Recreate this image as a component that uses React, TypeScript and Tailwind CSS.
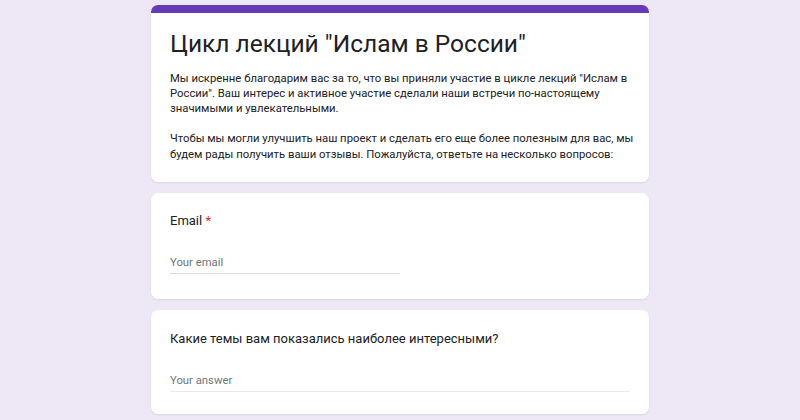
import React from 'react';

export default function App() {
  return (
    <div
      className="min-h-[420px] w-full bg-[#ede7f6] pt-[5px] text-[#202124]"
      style={{ fontFamily: 'Roboto, "Noto Sans", sans-serif' }}
    >
      <div className="mx-auto flex w-[498px] flex-col gap-[11px]">
        {/* Header card */}
        <div className="overflow-hidden rounded-[7px] bg-white shadow-[0_1px_2px_rgba(0,0,0,0.08)]">
          <div className="h-[8px] bg-[#673ab7]" />
          <div className="pb-[19px] pl-[19px] pr-[12px] pt-[14px]">
            <h1 className="text-[24.5px] leading-[34px] font-normal">
              Цикл лекций "Ислам в России"
            </h1>
            <p className="mt-[10px] text-[11.3px] leading-[15px]">
              Мы искренне благодарим вас за то, что вы приняли участие в цикле лекций "Ислам в России". Ваш интерес и активное участие сделали наши встречи по-настоящему значимыми и увлекательными.
            </p>
            <p className="mt-[15px] text-[11.3px] leading-[16px]">
              Чтобы мы могли улучшить наш проект и сделать его еще более полезным для вас, мы будем рады получить ваши отзывы. Пожалуйста, ответьте на несколько вопросов:
            </p>
          </div>
        </div>

        {/* Email card */}
        <div className="rounded-[7px] bg-white px-[19px] pb-[25px] pt-[19px] shadow-[0_1px_2px_rgba(0,0,0,0.08)]">
          <div className="text-[13px] leading-[18px]">
            Email <span className="text-[#d93025]">*</span>
          </div>
          <div className="mt-[25px] w-[230px] border-b border-[#dadce0] pb-[2px] text-[11.3px] leading-[16px] text-[#70757a]">
            Your email
          </div>
        </div>

        {/* Question card */}
        <div className="rounded-[7px] bg-white px-[19px] pb-[22px] pt-[20px] shadow-[0_1px_2px_rgba(0,0,0,0.08)]">
          <div className="text-[13px] leading-[18px]">
            Какие темы вам показались наиболее интересными?
          </div>
          <div className="mt-[25px] w-full border-b border-[#e8eaed] pb-[2px] text-[11.3px] leading-[16px] text-[#70757a]">
            Your answer
          </div>
        </div>
      </div>
    </div>
  );
}
